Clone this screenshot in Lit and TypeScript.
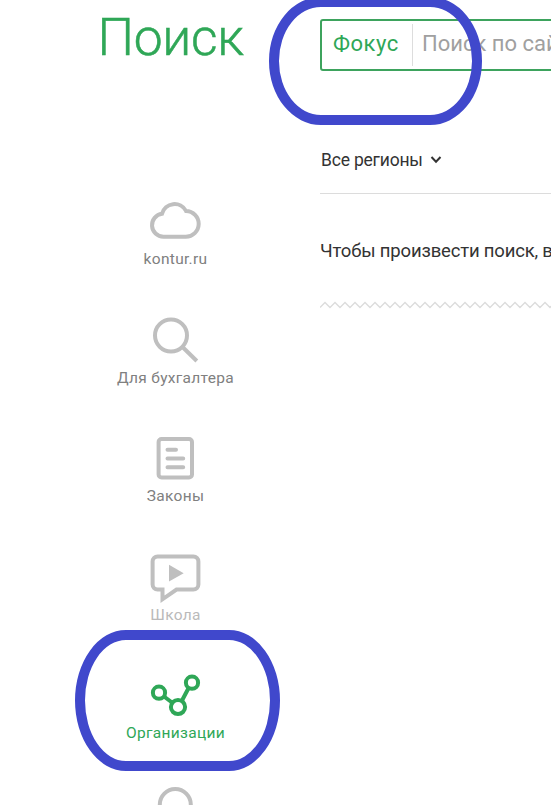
import { LitElement, html, css, svg } from "lit";
import { customElement } from "lit/decorators.js";
import { classMap } from "lit/directives/class-map.js";

const icons = {
  cloud: svg`<path d="M13.4 41.7A11.5 11.5 0 0 1 12 18.8 13 13 0 0 1 36 15.9a12.9 12.9 0 0 1-.4 25.8z"/>`,
  search: svg`<circle cx="21" cy="21.5" r="16"/><path d="M32.5 33 46.8 47"/>`,
  doc: svg`<rect x="8.6" y="7" width="33.4" height="38.4" rx="3"/><path stroke-linecap="round" d="M17.5 17.7h8.5M17.5 26.4h15.7M17.5 35.3h15.7"/>`,
  school: svg`<path d="M7.6 5.4h35.8a5 5 0 0 1 5 5v23.2a5 5 0 0 1-5 5H26.5L12.5 48.3V38.6H7.6a5 5 0 0 1-5-5V10.4a5 5 0 0 1 5-5z"/><path class="solid" d="M19 13.8 33.7 22.2 19 30.5z"/>`,
  nodes: svg`<circle cx="9" cy="23.7" r="6.1"/><circle cx="42" cy="13.7" r="6.1"/><circle cx="28" cy="38" r="7.1"/><path d="m14 27.5 8 6M38.6 19 32 31.5"/>`,
  more: svg`<circle cx="25.3" cy="16.5" r="15.5"/>`,
};

const items = [
  { id: "kontur", label: "kontur.ru", icon: icons.cloud },
  { id: "buh", label: "Для бухгалтера", icon: icons.search },
  { id: "laws", label: "Законы", icon: icons.doc },
  { id: "school", label: "Школа", icon: icons.school },
  { id: "orgs", label: "Организации", icon: icons.nodes },
  { id: "more", label: "", icon: icons.more },
];

@customElement("app-root")
export class AppRoot extends LitElement {
  static styles = css`
    :host { display: block; position: relative; width: 100%; height: 805px; overflow: hidden; background: #fff;
      font-family: Roboto, "Noto Sans", sans-serif; color: #333; }
    .page { display: grid; grid-template-columns: 320px 760px; height: 100%; }
    .side { padding-top: 5px; }
    h1 { margin: 0 0 0 97.5px; font-size: 51.5px; letter-spacing: -0.3px; line-height: 66px; height: 190px; font-weight: 300; color: #2fa757; -webkit-text-stroke: 0.5px #2fa757; white-space: nowrap; }
    .nav { display: flex; flex-direction: column; width: 160px; margin-left: 95.5px; }
    .item { height: 118.5px; flex: none; display: flex; flex-direction: column; align-items: center; color: #808080; white-space: nowrap; }
    .item svg { width: 51px; height: 54px; fill: none; stroke: #bfbfbf; stroke-width: 4; flex: none; overflow: visible; }
    .item .solid { fill: #bfbfbf; stroke: none; }
    .label { font-size: 15.5px; line-height: 21px; letter-spacing: 0.3px; }
    .school { color: #bababa; }
    .orgs { color: #2fa757; }
    .item.orgs svg { stroke: #2fa757; }
    .main { padding-top: 19px; }
    .search { box-sizing: border-box; height: 52px; border: 2px solid #3da35d; border-radius: 3px; display: flex; align-items: center; font-size: 22px; white-space: nowrap; }
    .scope { width: 91px; height: 42px; box-sizing: border-box; padding-left: 11px; line-height: 40px; letter-spacing: 0.5px; border-right: 1px solid #ddd; color: #2fa757; }
    .hint { padding-left: 9px; line-height: 40px; height: 42px; color: #a0a0a0; }
    .filter { height: 123px; box-sizing: border-box; padding: 76px 0 0 1px; border-bottom: 1px solid #dcdcdc; display: flex; gap: 7px; line-height: 26px; font-size: 17.5px; letter-spacing: -0.2px; white-space: nowrap; }
    .filter svg { width: 12px; height: 8px; margin-top: 9px; fill: none; stroke: #333; stroke-width: 2; }
    .message { margin: 43px 0 0; font-size: 18.5px; line-height: 28px; letter-spacing: -0.18px; white-space: nowrap; }
    .zigzag { display: block; width: 760px; height: 8px; margin-top: 36px; fill: none; stroke: #dcdcdc; stroke-width: 1.4; }
    .ring { position: absolute; box-sizing: border-box; border: 10px solid #4048cc; pointer-events: none; }
    .ring-search { left: 269px; top: -3px; width: 213px; height: 127.5px; border-radius: 52px / 63.75px; }
    .ring-orgs { left: 75px; top: 630px; width: 205px; height: 141px; border-radius: 51px / 70.5px; }
  `;

  render() {
    return html`
      <div class="page">
        <aside class="side">
          <h1>Поиск</h1>
          <nav class="nav">
            ${items.map(i => html`<div class=${classMap({ item: true, [i.id]: true })}>
              <svg viewBox="0 0 51 54">${i.icon}</svg><span class="label">${i.label}</span></div>`)}
          </nav>
        </aside>
        <main class="main">
          <div class="search"><div class="scope">Фокус</div><span class="hint">Поиск по сайту</span></div>
          <div class="filter"><span>Все регионы</span><svg viewBox="0 0 12 8"><path d="m1.5 1 4.500 4.700L10.500 1"/></svg></div>
          <p class="message">Чтобы произвести поиск, введите запрос</p>
          <svg class="zigzag" viewBox="0 0 760 8"><path d=${"M0 6.5" + "l5-5 5 5".repeat(76)}/></svg>
        </main>
      </div>
      <div class="ring ring-search"></div>
      <div class="ring ring-orgs"></div>
    `;
  }
}
